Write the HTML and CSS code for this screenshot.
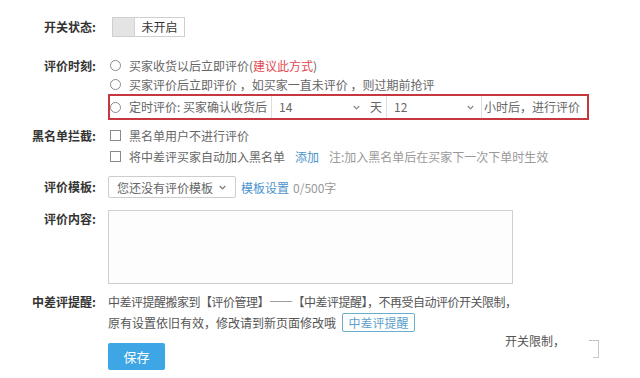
FILE: index.html
```html
<!DOCTYPE html>
<html lang="zh-CN">
<head>
<meta charset="utf-8">
<title>自动评价设置</title>
<link rel="stylesheet" href="styles.css">
</head>
<body>
<div class="form">
  <div class="row row-switch">
    <div class="label">开关状态:</div>
    <div class="field">
      <span class="switch"><span class="knob"></span><span class="stxt">未开启</span></span>
    </div>
  </div>

  <div class="row row-time">
    <div class="label lh19">评价时刻:</div>
    <div class="field">
      <div class="opt lh19"><span class="radio"></span>买家收货以后立即评价(<span class="red">建议此方式</span>)</div>
      <div class="opt lh19"><span class="radio"></span>买家评价后立即评价 ，如买家一直未评价 ，则过期前抢评</div>
      <div class="hl">
        <span class="radio in"></span><span class="hl-text">定时评价: 买家确认收货后</span>
        <span class="sel s1"><span>14</span><svg class="chev" width="7" height="5" viewBox="0 0 7 5"><path d="M0.8 1 L3.5 3.8 L6.2 1" fill="none" stroke="#888" stroke-width="1.2"/></svg></span>
        <span class="day">天</span>
        <span class="sel s2"><span>12</span><svg class="chev" width="7" height="5" viewBox="0 0 7 5"><path d="M0.8 1 L3.5 3.8 L6.2 1" fill="none" stroke="#888" stroke-width="1.2"/></svg></span>
        <span class="after">小时后，进行评价</span>
      </div>
    </div>
  </div>

  <div class="row row-black">
    <div class="label lh21">黑名单拦截:</div>
    <div class="field">
      <div class="opt lh21"><span class="check"></span>黑名单用户不进行评价</div>
      <div class="opt lh21"><span class="check"></span>将中差评买家自动加入黑名单<a class="link add">添加</a><span class="note">注:加入黑名单后在买家下一次下单时生效</span></div>
    </div>
  </div>

  <div class="row row-tpl">
    <div class="label lh22">评价模板:</div>
    <div class="field flexline">
      <span class="tplsel">您还没有评价模板<svg class="chev" width="7" height="5" viewBox="0 0 7 5"><path d="M0.8 1 L3.5 3.8 L6.2 1" fill="none" stroke="#777" stroke-width="1.2"/></svg></span>
      <a class="link tplset">模板设置</a><span class="count">0/500字</span>
    </div>
  </div>

  <div class="row row-content">
    <div class="label lh18">评价内容:</div>
    <div class="field"><div class="textarea"></div></div>
  </div>

  <div class="row row-remind">
    <div class="label lh21">中差评提醒:</div>
    <div class="field">
      <div class="opt lh21 dark tight">中差评提醒搬家到【评价管理】——【中差评提醒】，不再受自动评价开关限制，</div>
      <div class="opt lh21 dark">原有设置依旧有效，修改请到新页面修改哦<span class="remind-btn">中差评提醒</span></div>
    </div>
  </div>

  <div class="row row-save">
    <div class="label"></div>
    <div class="field"><span class="save">保存</span></div>
  </div>
</div>
<div class="stray">开关限制，</div>
<div class="crop-mark"></div>
</body>
</html>
```

FILE: styles.css
```css
* { box-sizing: border-box; }
html, body { margin: 0; padding: 0; }
body {
  width: 640px;
  height: 378px;
  overflow: hidden;
  position: relative;
  background: #fff;
  font-family: "Noto Sans CJK SC", "Noto Sans", sans-serif;
  font-size: 12px;
  color: #666;
}
.form { padding-top: 17px; }
.row { display: flex; align-items: flex-start; }
.label {
  width: 96px;
  flex: none;
  margin-right: 12px;
  text-align: right;
  font-weight: bold;
  color: #333;
  white-space: nowrap;
}
.field { flex: 1; min-width: 0; }
.lh18 { line-height: 18px; }
.lh19 { line-height: 19px; }
.lh21 { line-height: 21px; }
.lh22 { line-height: 22px; }

/* switch */
.row-switch .label { line-height: 20px; }
.switch {
  display: inline-flex;
  margin-left: 4px;
  height: 20px;
  width: 73px;
  border: 1px solid #cfcfcf;
}
.knob { width: 22px; background: #e4e4e4; border-right: 1px solid #d4d4d4; }
.stxt { flex: 1; text-align: center; line-height: 18px; color: #333; }

/* time */
.row-time { margin-top: 17px; }
.opt { display: flex; align-items: center; white-space: nowrap; }
.radio {
  width: 11px; height: 11px; flex: none;
  border: 1px solid #8a8a8a; border-radius: 50%;
  margin-left: 2px; margin-right: 8px;
}
.radio.in { margin-left: 0; margin-right: 8px; }
.red { color: #e2494f; }
.hl {
  display: flex;
  align-items: stretch;
  width: 481px;
  height: 26px;
  border: 2px solid #c5383f;
  white-space: nowrap;
}
.hl .radio { align-self: center; }
.hl-text { line-height: 22px; margin-right: 4px; }
.sel {
  display: flex; align-items: center; justify-content: space-between;
  border-left: 1px solid #dedede;
  padding: 0 7px 0 7px;
  line-height: 22px;
}
.s1 { width: 96px; }
.s2 { width: 95px; }
.day { line-height: 22px; padding: 0 4px 0 3px; }
.after { line-height: 22px; border-left: 1px solid #dedede; padding-left: 2px; }
.chev { display: block; }

/* blacklist */
.row-black { margin-top: 5px; }
.check {
  width: 11px; height: 11px; flex: none;
  border: 1px solid #8a8a8a;
  margin-left: 2px; margin-right: 8px;
}
.link { color: #4a93cc; text-decoration: none; }
.add { margin-left: 10px; margin-right: 10px; }
.note { color: #999; }

/* template */
.row-tpl { margin-top: 9px; }
.flexline { display: flex; align-items: center; white-space: nowrap; height: 22px; }
.tplsel {
  display: inline-flex; align-items: center; justify-content: space-between;
  width: 128px; height: 22px;
  border: 1px solid #cdcdcd; border-radius: 2px;
  padding: 0 9px 0 8px;
  color: #666;
}
.tplset { margin-left: 5px; margin-right: 4px; }
.count { color: #999; }

/* content */
.row-content { margin-top: 12px; }
.textarea {
  width: 405px; height: 74px;
  border: 1px solid #cfcfcf;
  background: #fdfdfd;
}

/* remind */
.row-remind { margin-top: 7px; }
.dark { color: #555; }
.tight { letter-spacing: -0.5px; }
.remind-btn {
  display: inline-block;
  margin-left: 6px;
  width: 73px; height: 19px;
  line-height: 17px;
  border: 1px solid #6aaecd;
  border-radius: 2px;
  text-align: center;
  color: #5d9fcb;
}

/* save */
.row-save { margin-top: 10px; }
.save {
  display: inline-block;
  width: 57px; height: 27px;
  line-height: 27px;
  text-align: center;
  background: #3ea6e5;
  color: #fff;
  font-size: 13px;
  border-radius: 2px;
}

/* stray overlaid fragments */
.stray {
  position: absolute;
  left: 505px; top: 333px;
  color: #555;
  line-height: 16px;
  white-space: nowrap;
}
.crop-mark {
  position: absolute;
  left: 589px; top: 340px;
  width: 10px; height: 18px;
  border-top: 1px dashed #bbb;
  border-right: 1px solid #c8c8c8;
}
.crop-mark::after {
  content: "";
  position: absolute;
  right: 0; bottom: 0;
  width: 5px;
  border-bottom: 1px solid #c8c8c8;
}
```
